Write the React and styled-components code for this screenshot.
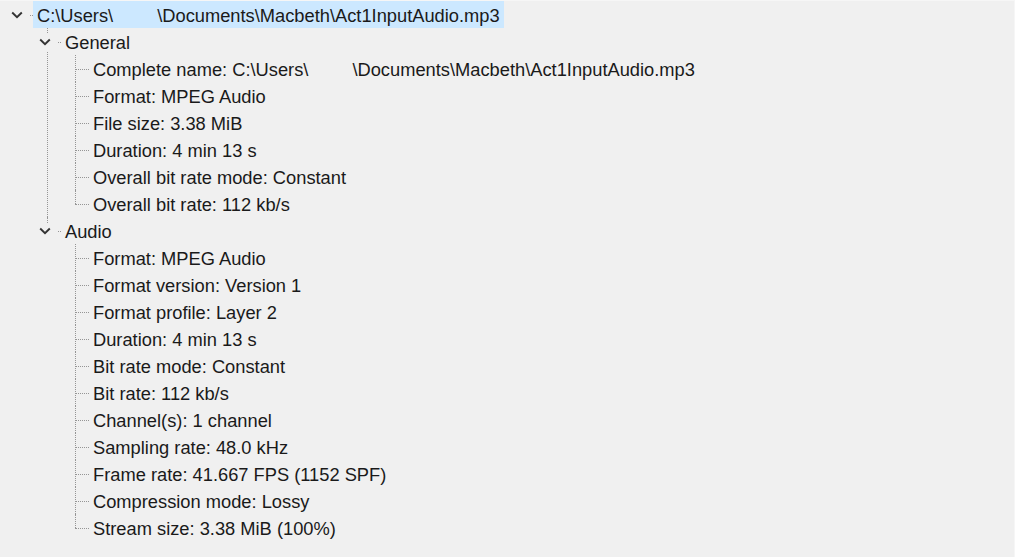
import React from 'react';
import styled, { createGlobalStyle } from 'styled-components';

const Global = createGlobalStyle`
  html, body { margin: 0; padding: 0; background: #f0f0f0; }
  body { font-family: "Liberation Sans", Arial, sans-serif; }
`;

const Pane = styled.div`
  width: 1015px;
  height: 557px;
  box-sizing: border-box;
  border-top: 1px solid #f6f6f6;
  border-right: 1px solid #f6f6f6;
  background: #f0f0f0;
  overflow: hidden;
  font-size: 18.3px;
  color: #1a1a1a;
`;

const List = styled.ul`
  list-style: none;
  margin: 0;
  padding: 0 0 0 ${(p) => (p.$nested ? 28 : 0)}px;
`;

const Item = styled.li`
  position: relative;
  &::before {
    content: '';
    display: ${(p) => (p.$root ? 'none' : 'block')};
    position: absolute;
    left: 19px;
    top: 0;
    ${(p) => (p.$last ? 'height: 14px;' : 'bottom: 0;')}
    border-left: 1px dotted #959595;
  }
`;

const Row = styled.div`
  display: flex;
  align-items: center;
  height: 27px;
`;

const Connector = styled.span`
  position: relative;
  flex: 0 0 33px;
  height: 100%;
  display: flex;
  align-items: center;
  &::before {
    content: '';
    position: absolute;
    left: 19px;
    right: 0;
    top: 14px;
    border-top: 1px dotted #959595;
  }
`;

const Expander = styled.span`
  position: relative;
  z-index: 1;
  width: 25px;
  height: 17px;
  margin-left: 4px;
  margin-top: 1px;
  background: #f0f0f0;
  display: flex;
  align-items: center;
  justify-content: center;
`;

const Label = styled.span`
  box-sizing: border-box;
  height: 27px;
  line-height: 24px;
  padding: 3px 4px 0;
  white-space: nowrap;
  background: ${(p) => (p.$selected ? '#cce8ff' : 'transparent')};
`;

const Redacted = styled.span`
  display: inline-block;
  width: 44px;
`;

const GAP = '__gap__';

const Chevron = () => (
  <svg width="12" height="8" viewBox="0 0 12 8" aria-hidden="true">
    <polyline points="1.2,1.5 6,6.2 10.8,1.5" fill="none" stroke="#333" strokeWidth="1.9" />
  </svg>
);

const path = ['C:\\Users\\', GAP, '\\Documents\\Macbeth\\Act1InputAudio.mp3'];

const tree = {
  label: path,
  selected: true,
  children: [
    {
      label: ['General'],
      children: [
        { label: ['Complete name: ', ...path] },
        { label: ['Format: MPEG Audio'] },
        { label: ['File size: 3.38 MiB'] },
        { label: ['Duration: 4 min 13 s'] },
        { label: ['Overall bit rate mode: Constant'] },
        { label: ['Overall bit rate: 112 kb/s'] },
      ],
    },
    {
      label: ['Audio'],
      children: [
        { label: ['Format: MPEG Audio'] },
        { label: ['Format version: Version 1'] },
        { label: ['Format profile: Layer 2'] },
        { label: ['Duration: 4 min 13 s'] },
        { label: ['Bit rate mode: Constant'] },
        { label: ['Bit rate: 112 kb/s'] },
        { label: ['Channel(s): 1 channel'] },
        { label: ['Sampling rate: 48.0 kHz'] },
        { label: ['Frame rate: 41.667 FPS (1152 SPF)'] },
        { label: ['Compression mode: Lossy'] },
        { label: ['Stream size: 3.38 MiB (100%)'] },
      ],
    },
  ],
};

const Node = ({ node, root, last }) => {
  const expandable = node.children && node.children.length > 0;
  return (
    <Item $root={root} $last={last}>
      <Row>
        <Connector>
          {expandable && (
            <Expander>
              <Chevron />
            </Expander>
          )}
        </Connector>
        <Label $selected={node.selected}>
          {node.label.map((seg, i) => (seg === GAP ? <Redacted key={i} /> : <React.Fragment key={i}>{seg}</React.Fragment>))}
        </Label>
      </Row>
      {expandable && (
        <List $nested>
          {node.children.map((c, i) => (
            <Node key={i} node={c} last={i === node.children.length - 1} />
          ))}
        </List>
      )}
    </Item>
  );
};

export default function App() {
  return (
    <>
      <Global />
      <Pane>
        <List>
          <Node node={tree} root last />
        </List>
      </Pane>
    </>
  );
}
